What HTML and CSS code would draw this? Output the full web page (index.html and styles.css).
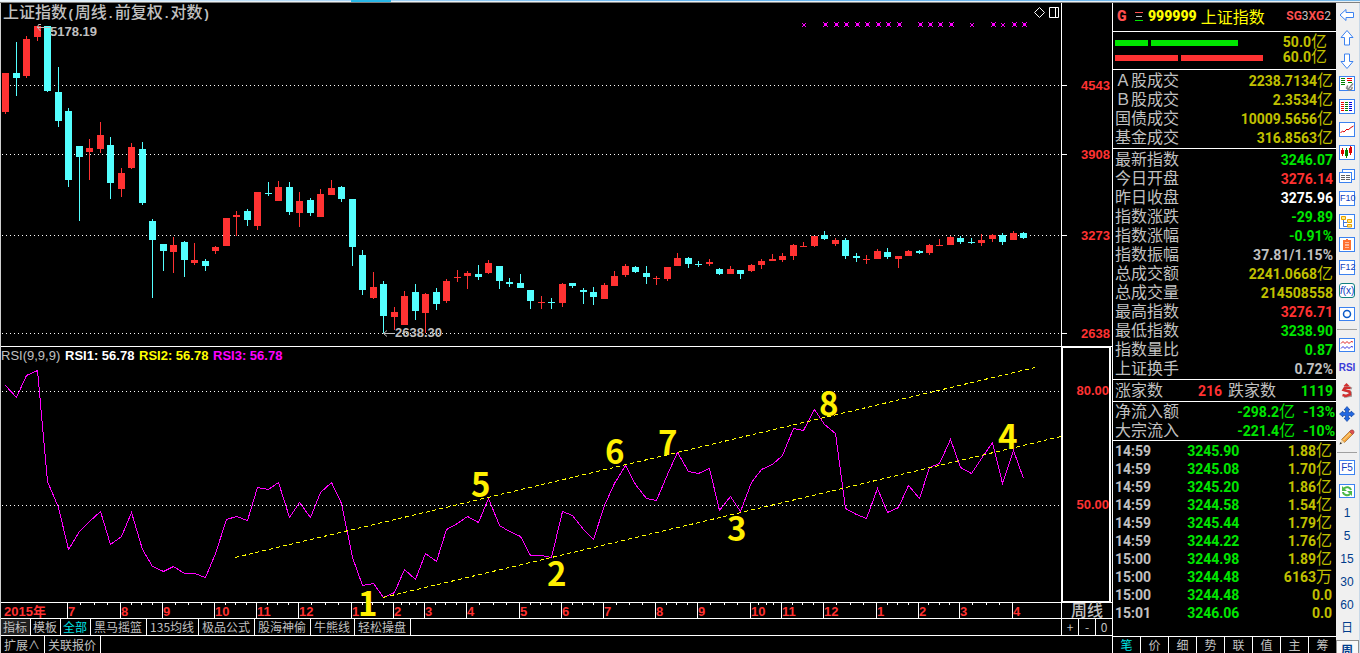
FILE: index.html
```html
<!DOCTYPE html>
<html lang="zh-CN">
<head>
<meta charset="utf-8">
<title>上证指数</title>
<link rel="stylesheet" href="styles.css">
</head>
<body>
<div class="app">
  <div class="topbar"><span class="topbar-mark"></span></div>
  <div class="workspace">
    <main class="charts">
      <section class="row price">
        <svg class="plot" height="343">
          <g transform="translate(-1 -3)">
            <g class="grid">
              <line x1="2" x2="100%" y1="85.5" y2="85.5"/>
              <line x1="2" x2="100%" y1="154.5" y2="154.5"/>
              <line x1="2" x2="100%" y1="235.5" y2="235.5"/>
              <line x1="2" x2="100%" y1="333.5" y2="333.5"/>
            </g>
            <path id="candles-up" class="up"/>
            <path id="candles-down" class="down"/>
            <path id="marks" class="marks"/>
            <path class="pointer" d="M37 27.500H50M41 24.500H38.500L37.500 27.500L40.500 31M384 333.500H395M387 330.500L383.500 333.500L387 336.500"/>
            <text class="title" x="3" y="18">上证指数<tspan class="punct">(</tspan>周线<tspan class="punct">.</tspan>前复权<tspan class="punct">.</tspan>对数<tspan class="punct">)</tspan></text>
            <text class="note" x="50" y="36">5178.19</text>
            <text class="note" x="395" y="337">2638.30</text>
            <path class="tool" d="M1039.500 7.500L1044.500 12.500L1039.500 17.500L1034.500 12.500Z"/>
            <path class="tool" d="M1049.500 7.500H1058.500V17.500H1049.500ZM1055.500 7.500V17.500"/>
          </g>
        </svg>
        <svg class="scale" height="343">
          <g transform="translate(0 -3)">
            <path class="tick" d="M0 85.500H5M0 154.500H5M0 235.500H5M0 333.500H5"/>
            <text class="scale-text" x="48" y="90">4543</text>
            <text class="scale-text" x="48" y="159">3908</text>
            <text class="scale-text" x="48" y="240">3273</text>
            <text class="scale-text" x="48" y="338">2638</text>
          </g>
        </svg>
      </section>

      <section class="row rsi">
        <svg class="plot" height="255">
          <g transform="translate(-1 -347)">
            <g class="grid">
              <line x1="2" x2="100%" y1="391.5" y2="391.5"/>
              <line x1="2" x2="100%" y1="505.5" y2="505.5"/>
            </g>
            <polyline id="rsi-line" class="rsi-line"/>
            <path class="trend" d="M235 557.500L1035 367.500M383 597.500L1061 436.500"/>
            <text class="legend legend-name" x="1" y="360">RSI(9,9,9)</text>
            <text class="legend legend-1" x="65" y="360">RSI1: 56.78</text>
            <text class="legend legend-2" x="139" y="360">RSI2: 56.78</text>
            <text class="legend legend-3" x="213" y="360">RSI3: 56.78</text>
            <g class="wave">
              <text x="358" y="616">1</text>
              <text x="547" y="586">2</text>
              <text x="727" y="541">3</text>
              <text x="998" y="449">4</text>
              <text x="471" y="497">5</text>
              <text x="605" y="464">6</text>
              <text x="658" y="455">7</text>
              <text x="819" y="416">8</text>
            </g>
          </g>
        </svg>
        <svg class="scale scale-boxed" height="253">
          <g transform="translate(0 -348)">
            <text class="scale-text" x="46" y="395">80.00</text>
            <text class="scale-text" x="46" y="509">50.00</text>
          </g>
        </svg>
      </section>

      <section class="row timeline">
        <svg class="plot" height="15"><g id="months" transform="translate(-1 0)"></g></svg>
        <div class="period">周线</div>
      </section>

      <nav class="row tabs">
        <div class="tab-list">
          <button class="tab tab-short tab-pressed">指标</button><button class="tab tab-short">模板</button><button class="tab tab-short tab-active">全部</button><button class="tab">黑马摇篮</button><button class="tab">135均线</button><button class="tab">极品公式</button><button class="tab">股海神偷</button><button class="tab">牛熊线</button><button class="tab">轻松操盘</button>
        </div>
        <div class="zoomers"><button>+</button><button>-</button><button>0</button></div>
      </nav>
      <nav class="row extras">
        <button class="tab">扩展∧</button><button class="tab">关联报价</button>
      </nav>
    </main>

    <aside class="quote">
      <header class="quote-head">
        <b class="flag">G</b>
        <svg class="lines" width="8" height="10"><path stroke="#ff5050" d="M0 .5H8"/><path stroke="#c0c0c0" d="M1 4.500H7"/><path stroke="#00e600" d="M0 8.500H8"/></svg>
        <b class="code">999999</b>
        <span class="name">上证指数</span>
        <span class="badges"><b>SG</b>3<b>XG</b>2</span>
      </header>
      <div class="flows">
        <div class="flow"><i class="bar buy" style="width:33px"></i><i class="bar buy" style="width:87px"></i><span class="flow-value">50.0<span class="unit">亿</span></span></div>
        <div class="flow"><i class="bar sell" style="width:63px"></i><i class="bar sell" style="width:82px"></i><span class="flow-value">60.0<span class="unit">亿</span></span></div>
      </div>
      <table class="facts">
        <tr><th>Ａ股成交</th><td class="olive">2238.7134<span class="unit">亿</span></td></tr>
        <tr><th>Ｂ股成交</th><td class="olive">2.3534<span class="unit">亿</span></td></tr>
        <tr><th>国债成交</th><td class="olive">10009.5656<span class="unit">亿</span></td></tr>
        <tr><th>基金成交</th><td class="olive">316.8563<span class="unit">亿</span></td></tr>
      </table>
      <table class="facts">
        <tr><th>最新指数</th><td class="green">3246.07</td></tr>
        <tr><th>今日开盘</th><td class="red">3276.14</td></tr>
        <tr><th>昨日收盘</th><td class="white">3275.96</td></tr>
        <tr><th>指数涨跌</th><td class="green">-29.89</td></tr>
        <tr><th>指数涨幅</th><td class="green">-0.91%</td></tr>
        <tr><th>指数振幅</th><td>37.81/1.15%</td></tr>
        <tr><th>总成交额</th><td class="olive">2241.0668<span class="unit">亿</span></td></tr>
        <tr><th>总成交量</th><td class="olive">214508558</td></tr>
        <tr><th>最高指数</th><td class="red">3276.71</td></tr>
        <tr><th>最低指数</th><td class="green">3238.90</td></tr>
        <tr><th>指数量比</th><td class="green">0.87</td></tr>
        <tr><th>上证换手</th><td>0.72%</td></tr>
      </table>
      <table class="facts breadth">
        <tr><th>涨家数</th><td class="red">216</td><th class="second">跌家数</th><td class="green falling">1119</td></tr>
      </table>
      <table class="facts inflow">
        <tr><th>净流入额</th><td class="green">-298.2<span class="unit">亿</span></td><td class="green share">-13%</td></tr>
        <tr><th>大宗流入</th><td class="green">-221.4<span class="unit">亿</span></td><td class="green share">-10%</td></tr>
      </table>
      <div class="deals">
        <table>
          <tr><td>14:59</td><td>3245.90</td><td>1.88<span class="unit">亿</span></td></tr>
          <tr><td>14:59</td><td>3245.08</td><td>1.70<span class="unit">亿</span></td></tr>
          <tr><td>14:59</td><td>3245.20</td><td>1.86<span class="unit">亿</span></td></tr>
          <tr><td>14:59</td><td>3244.58</td><td>1.54<span class="unit">亿</span></td></tr>
          <tr><td>14:59</td><td>3245.44</td><td>1.79<span class="unit">亿</span></td></tr>
          <tr><td>14:59</td><td>3244.22</td><td>1.76<span class="unit">亿</span></td></tr>
          <tr><td>15:00</td><td>3244.98</td><td>1.89<span class="unit">亿</span></td></tr>
          <tr><td>15:00</td><td>3244.48</td><td>6163<span class="unit">万</span></td></tr>
          <tr><td>15:00</td><td>3244.48</td><td>0.0</td></tr>
          <tr><td>15:01</td><td>3246.06</td><td>0.0</td></tr>
        </table>
      </div>
      <nav class="quote-tabs">
        <button class="current">笔</button><button>价</button><button>细</button><button>势</button><button>联</button><button>值</button><button>主</button><button>筹</button>
      </nav>
    </aside>

    <div class="toolbar">
      <button aria-label="后退"><svg class="ico arrow" viewBox="0 0 16 16"><path d="M1 8L7 2.500V5.500H14.500V10.500H7V13.500Z"/></svg></button>
      <button aria-label="上"><svg class="ico arrow" viewBox="0 0 16 16"><path d="M8 .5L14 7.500H10.500V15H5.500V7.500H2Z"/></svg></button>
      <button aria-label="下"><svg class="ico arrow" viewBox="0 0 16 16"><path d="M8 15.500L14 8.500H10.500V1H5.500V8.500H2Z"/></svg></button>
      <button aria-label="报价"><svg class="ico" viewBox="0 0 16 16"><rect class="frame" x=".5" y=".5" width="15" height="14"/><path stroke="#008000" d="M2 2.500H6M2 4.500H6M2 6.500H6M2 8.500H6M9 6.500H13"/><path stroke="#f00000" d="M8 2.500H13M8 4.500H13"/><path fill="none" stroke="#888" stroke-width="1.500" d="M7 11.500L9 13.500L14 7.500M9 9.500A2.500 2.500 0 1 0 13 11"/></svg></button>
      <button aria-label="列表"><svg class="ico" viewBox="0 0 16 16"><rect class="frame" x=".5" y=".5" width="15" height="14"/><path stroke="#f00000" d="M2 3.500H5M2 5.500H5M2 7.500H5M2 9.500H5M2 11.500H5"/><path stroke="#008000" d="M6 3.500H9M6 5.500H9M6 7.500H9M6 9.500H9M6 11.500H9"/><path stroke="#0000e0" d="M10 3.500H13M10 5.500H13M10 7.500H13M10 9.500H13M10 11.500H13"/></svg></button>
      <button aria-label="分时"><svg class="ico" viewBox="0 0 16 16"><rect class="frame" x=".5" y=".5" width="15" height="14"/><path fill="none" stroke="#e00000" d="M1.500 11L3.500 9L5 10L8 7L9 8L12 5.500L14.500 4"/></svg></button>
      <button aria-label="K线"><svg class="ico" viewBox="0 0 16 16"><rect class="frame" x=".5" y=".5" width="15" height="14"/><path fill="#e00000" d="M2 5h1V3h1v2h1v4H4v2H3V9H2zM10 3h1V1h1v1h1v6h-1v2h-1V8h-1z"/><path fill="#008000" d="M6 5h1V3h1v2h1v6H8v2H7v-2H6z"/></svg></button>
      <button aria-label="资讯"><svg class="ico" viewBox="0 0 16 16"><rect class="frame" x="3.500" y="1.500" width="12" height="10"/><rect class="frame" x=".5" y="4.500" width="12" height="10"/><path stroke="#606060" d="M2 7.500H6M7 7.500H11M2 9.500H6M7 9.500H11M2 11.500H6M7 11.500H11"/></svg></button>
      <button><span class="key key-long">F10</span></button>
      <button aria-label="板块"><svg class="ico" viewBox="0 0 16 16"><rect class="frame" x=".5" y=".5" width="15" height="14"/><path fill="none" stroke="#3a76e0" d="M4.500 6V12.500H8M4.500 8.500H8"/><path fill="#ffe880" stroke="#e8a000" d="M2.500 2.500H6.500V5.500H2.500ZM8.500 5.500H12.500V8.500H8.500ZM8.500 10.500H12.500V13H8.500Z"/></svg></button>
      <button aria-label="自选"><svg class="ico" viewBox="0 0 16 16"><rect class="frame" stroke="#1090f0" x=".5" y=".5" width="15" height="14"/><path fill="none" stroke="#ff7030" stroke-width="2" d="M5 4H11V12H5ZM8 2V4M5 6.500H11M5 9.500H11"/></svg></button>
      <button><span class="key key-long">F12</span></button>
      <button><span class="key key-formula"><i>f</i>(x)</span></button>
      <button aria-label="圆"><svg class="ico" viewBox="0 0 16 16"><rect class="frame" x=".5" y="1.500" width="15" height="13"/><circle cx="8" cy="8" r="3.500" fill="none" stroke="#0a5ac8" stroke-width="1.500"/></svg></button>
      <hr>
      <button aria-label="叠加"><svg class="ico" viewBox="0 0 16 16"><rect class="frame" x=".5" y="1.500" width="15" height="13"/><path fill="none" stroke="#e02020" d="M2 6.500L4 4.500L6 6.500L8 4.500L10 6.500L12 4.500L14 5"/><path fill="none" stroke="#3030e0" d="M2 11.500L4 9.500L6 11.500L8 9.500L10 11.500L12 9.500L14 10"/></svg></button>
      <button class="rsi-key">RSI</button>
      <button aria-label="资金"><svg class="ico" viewBox="0 0 16 16"><path fill="none" stroke="#a0a0a0" stroke-width="2" d="M13 5.500L8 4L5 7L12 9.500V13L5 14"/><path fill="none" stroke="#d03030" stroke-width="2.500" d="M11.500 5L6 4.500L4.500 7L10.500 8.500L11 11.500L7 13L3.500 12"/><path fill="#d03030" d="M7.500 0L10.500 3H4.500Z"/></svg></button>
      <button aria-label="移动"><svg class="ico" viewBox="0 0 16 16"><path fill="#2468e0" stroke="#083c9c" stroke-width=".6" d="M8 .5L11 4H9.500V6.500H12V5L15.500 8L12 11V9.500H9.500V12H11L8 15.500L5 12H6.500V9.500H4V11L.5 8L4 5V6.500H6.500V4H5Z"/></svg></button>
      <button aria-label="画线"><svg class="ico" viewBox="0 0 16 16"><path fill="#f5a63c" stroke="#8a5520" stroke-width=".6" d="M2.500 10.500L10.500 2.500L13.500 5.500L5.500 13.500Z"/><path fill="#e05050" stroke="#904040" stroke-width=".6" d="M10.500 2.500L12 1H14L15 2.500V4L13.500 5.500Z"/><path fill="#f4dcb0" d="M2.500 10.500L5.500 13.500L1 15Z"/><path fill="#303030" d="M1.500 13L3 14.500L.5 15.500Z"/><path stroke="#ffe0a0" d="M4.500 11L11.500 4"/></svg></button>
      <hr>
      <button><span class="key">F5</span></button>
      <button aria-label="刷新"><svg class="ico" viewBox="0 0 16 16"><rect class="frame" x=".5" y="1.500" width="15" height="13"/><path fill="none" stroke="#4cb848" stroke-width="2" d="M12 7A4 3.500 0 0 0 5 5.500M4 9A4 3.500 0 0 0 11 11"/><path fill="#4cb848" d="M3 3V8H8ZM13 13V8H8Z"/></svg></button>
      <button>1</button>
      <button>5</button>
      <button>15</button>
      <button>30</button>
      <button>60</button>
      <button class="cjk">日</button>
      <button class="cjk chosen">周</button>
    </div>
  </div>
</div>
<script src="chart.js"></script>
</body>
</html>
```
FILE: styles.css
```css
* { box-sizing: border-box; }

body {
  margin: 0;
  background: #000;
  color: #c0c0c0;
  font-family: "Liberation Sans", "Noto Sans CJK SC", sans-serif;
}

button {
  margin: 0;
  padding: 0;
  border: 0;
  background: none;
  color: inherit;
  font: inherit;
  cursor: pointer;
}

.app {
  display: flex;
  flex-direction: column;
  height: 100vh;
  overflow: hidden;
}

.topbar {
  flex: none;
  height: 3px;
  border-bottom: 1px solid #808080;
  background: linear-gradient(to right, #f0f8ff, #64b4f0 50%, #78b8e8);
  box-shadow: inset 0 -1px #e8f0f4;
}
.topbar-mark {
  display: block;
  width: 40px;
  height: 2px;
  margin-left: 351px;
  background: #28b8e8;
}

.workspace {
  display: flex;
  flex: 1;
  min-height: 0;
}

/* Chart column */
.charts {
  flex: 1;
  min-width: 0;
  border-left: 1px solid #d0d0d0;
}
.row {
  display: flex;
  border-bottom: 1px solid #fff;
}
.plot {
  display: block;
  flex: 1;
  min-width: 0;
}
.scale {
  display: block;
  flex: none;
  width: 51px;
  border-left: 1px solid #fff;
}
.rsi .plot {
  position: relative;
  z-index: 1;
  overflow: visible;
}
.scale-boxed {
  width: 50px;
  height: 257px;
  margin: -1px 1px -1px 0;
  border: 2px solid #fff;
}

.grid line {
  stroke: #fff;
  stroke-dasharray: 1 3;
}
.up { fill: #ff3232; }
.down { fill: #54ffff; }
.marks { fill: #f0f; }
.pointer, .tool, .tick { fill: none; stroke: #c0c0c0; }
.tool, .tick { stroke: #fff; }
.title {
  fill: #c0c0c0;
  font: 500 16px "Noto Sans CJK SC", sans-serif;
}
.punct { font: bold 13px "Liberation Mono", monospace; }
.note, .scale-text, .legend, .month {
  font: bold 13px "Liberation Sans", "Noto Sans CJK SC", sans-serif;
}
.note { fill: #c0c0c0; }
.scale-text { fill: #ff3232; text-anchor: end; }
.month { fill: #ff3232; }
.legend-name { fill: #c0c0c0; font-weight: 400; }
.legend-1 { fill: #fff; }
.legend-2 { fill: #ff0; }
.legend-3 { fill: #f0f; }
.rsi-line { fill: none; stroke: #f0f; shape-rendering: crispEdges; }
.trend {
  fill: none;
  stroke: #ff0;
  stroke-dasharray: 4 3;
  shape-rendering: crispEdges;
}
.wave {
  fill: #fff000;
  font: bold 33px "Noto Sans CJK SC", sans-serif;
}

.period {
  width: 51px;
  height: 15px;
  border-left: 1px solid #fff;
  font: 500 16px/12px "Noto Sans CJK SC", sans-serif;
  text-align: center;
}

/* Bottom tab rows */
.tabs, .extras {
  font: 12px/16px "Noto Sans CJK SC", sans-serif;
}
.tab-list { display: flex; flex: 1; }
.tab {
  padding: 0 4px 0 3px;
  border-right: 1px solid #fff;
  white-space: nowrap;
}
.tab-short { padding: 0 3px 0 2px; }
.tab-pressed { background: #202020; }
.tab-active { color: #00e6e6; }
.zoomers { display: flex; width: 51px; }
.zoomers button {
  flex: 1;
  height: 16px;
  border-left: 1px solid #fff;
}
.extras { height: 17px; border-bottom: 0; }

/* Quote panel */
.quote {
  display: flex;
  flex: none;
  flex-direction: column;
  width: 224px;
  border-left: 1px solid #fff;
  font: bold 14px/19px Roboto, "Noto Sans CJK SC", sans-serif;
}
.quote-head {
  display: flex;
  align-items: center;
  height: 29px;
  padding: 0 5px 1px 4px;
  border-bottom: 1px solid #fff;
}
.flag { width: 18px; color: #ff5050; }
.lines { margin-right: 5px; }
.code { color: #ff0; }
.name {
  margin-left: 4px;
  color: #ff0;
  font: 16px/19px "Noto Sans CJK SC", sans-serif;
}
.badges { margin-left: auto; font-size: 12px; font-weight: 400; }
.badges b { color: #ff5050; }

.flows {
  height: 38px;
  padding: 3px 9px 0 2px;
  border-bottom: 1px solid #fff;
}
.flow {
  display: flex;
  gap: 3px;
  align-items: center;
  height: 15px;
}
.bar { height: 6px; }
.buy { background: #00e600; }
.sell { background: #ff3232; }
.flow-value { margin-left: auto; color: #c0c000; }
.unit { font-size: 16px; font-weight: 400; line-height: 16px; }

.quote table {
  width: 100%;
  border-collapse: collapse;
}
.quote th, .quote td {
  height: 19px;
  padding: 0;
  line-height: 18px;
  text-align: right;
  white-space: nowrap;
}
.quote th {
  font: 16px/16px "Noto Sans CJK SC", sans-serif;
  text-align: left;
  vertical-align: top;
}
.quote .facts {
  border-collapse: separate;
  border-spacing: 0;
  padding: 1px 3px 1px 2px;
  border-bottom: 1px solid #fff;
}
.quote .inflow { padding: 0 1px 0 2px; }
.quote .second { width: 54px; padding-left: 6px; }
.quote .falling { width: 57px; }
.quote .share { width: 40px; }
.olive { color: #c0c000; }
.green { color: #00e600; }
.red { color: #ff3232; }
.white { color: #fff; }

.deals {
  flex: 1;
  padding: 1px 4px 0 2px;
}
.quote .deals td { height: 18px; width: 33%; }
.quote .deals td:first-child { text-align: left; }
.quote .deals td:nth-child(2) { width: 40%; padding-right: 34px; color: #00e600; }
.quote .deals td:last-child { color: #c0c000; }

.quote-tabs {
  display: flex;
  height: 17px;
  border-top: 1px solid #fff;
  font: 12px/16px "Noto Sans CJK SC", sans-serif;
}
.quote-tabs button { flex: 1; }
.quote-tabs button + button { border-left: 1px solid #fff; }
.quote-tabs .current { color: #00e6e6; }

/* Icon toolbar */
.toolbar {
  display: flex;
  flex: none;
  flex-direction: column;
  width: 24px;
  overflow: hidden;
  border-right: 1px solid #c8d8e8;
  background: #f0f0f0;
  color: #003c8c;
  font: 12px/23px "Liberation Sans", "Noto Sans CJK SC", sans-serif;
}
.toolbar button {
  display: flex;
  flex: none;
  align-items: center;
  justify-content: center;
  height: 23px;
  padding-right: 1px;
}
.toolbar hr {
  flex: none;
  width: 20px;
  height: 1px;
  margin: 4px 1px 3px;
  border: 0;
  background: #a0a0a0;
}
.ico { width: 16px; height: 16px; }
.frame { fill: #fff; stroke: #3c82f0; }
.arrow path { fill: #fff; stroke: #3c82f0; }
.key {
  width: 16px;
  height: 15px;
  border: 1px solid #3c82f0;
  background: #fff;
  color: #1040c0;
  font: 10px/13px "Liberation Sans", sans-serif;
  text-align: center;
}
.key-long { font-size: 9px; }
.key-formula { border-color: #108080; border-radius: 3px; }
.rsi-key { color: #3c3cd8; font-size: 10px; font-weight: bold; }
.toolbar .chosen {
  border: 1px solid #909090;
  background: #f8f8f8;
  font-weight: bold;
}
```
FILE: chart.js
```javascript
// [direction, body top, body bottom, high, low]
const candles = [
  [1,73,112,73,114],[0,73,78,42,96],[1,39,76,36,78],[1,26,37,26,41],[0,26,91,26,92],
  [0,92,121,67,127],[0,111,180,108,187],[0,146,157,146,221],[1,148,152,139,180],[1,135,149,122,153],
  [0,145,183,137,199],[1,173,189,168,197],[1,147,168,143,169],[0,149,203,142,205],[0,221,240,219,298],
  [0,244,251,244,271],[1,245,252,237,273],[0,242,260,241,277],[1,260,263,243,265],[0,261,266,259,271],
  [1,247,251,246,254],[1,218,246,218,246],[1,215,217,211,236],[0,211,220,209,226],[1,192,226,192,230],
  [0,193,194,182,196],[1,187,201,181,201],[0,187,212,182,215],[1,201,213,192,227],[0,200,213,198,216],
  [1,194,217,189,217],[1,188,195,180,195],[0,187,199,186,202],[0,199,247,199,266],[0,255,290,250,295],
  [1,287,298,272,299],[0,284,316,281,333],[1,312,317,307,330],[1,296,325,291,325],[0,292,311,284,320],
  [1,294,313,293,333],[0,292,304,288,310],[1,281,301,279,303],[1,277,278,270,282],[1,273,276,271,289],
  [0,274,277,265,280],[1,263,273,260,274],[0,266,281,266,289],[0,282,284,278,287],[0,283,288,274,288],
  [0,290,301,290,309],[1,302,303,296,309],[0,302,303,298,309],[1,284,303,283,307],[0,283,286,283,288],
  [0,290,292,288,304],[0,292,297,287,305],[1,285,299,283,299],[1,276,286,271,286],[1,266,275,264,277],
  [0,267,272,266,273],[0,273,277,266,284],[1,278,279,276,285],[1,267,279,267,281],[1,258,266,253,266],
  [0,258,264,257,268],[0,264,265,261,267],[1,262,264,259,266],[0,269,274,268,275],[1,269,274,266,274],
  [0,270,274,270,279],[1,265,271,264,272],[1,261,265,259,269],[1,259,261,254,261],[1,256,260,253,262],
  [1,245,256,244,260],[1,246,247,242,247],[1,236,246,236,247],[0,235,239,231,240],[1,240,244,238,246],
  [0,240,256,238,259],[0,256,258,253,262],[1,259,260,255,264],[1,251,259,249,259],[0,252,257,248,259],
  [1,256,259,256,268],[1,251,256,250,256],[0,251,253,250,254],[1,245,253,244,255],[1,245,246,239,246],
  [1,237,245,236,245],[0,238,242,236,244],[0,242,243,238,244],[1,240,243,234,246],[1,235,239,234,242],
  [0,235,242,233,245],[1,233,240,231,240],[0,233,238,232,239]
];

const rsi = [
  385,397,375,370,481,507,549,531,521,511,544,536,512,549,566,571,566,573,573,577,
  553,519,516,520,487,489,482,517,502,517,492,482,503,557,585,583,597,592,569,579,
  553,561,529,523,516,522,498,525,531,536,555,555,557,511,515,529,539,505,483,465,
  484,498,500,474,452,471,473,468,510,496,511,482,469,464,455,428,430,409,424,433,
  508,514,518,488,512,507,485,498,467,463,439,467,473,458,442,483,450,478
];

const left = i => Math.round(2.088 + 10.499 * i);
const setPath = (id, d) => document.getElementById(id).setAttribute('d', d);

const paths = ['', ''];
candles.forEach(([up, top, bottom, high, low], i) => {
  const x = left(i);
  paths[up] += `M${x} ${top}h7V${bottom}h-7zM${x + 3} ${high}h1V${low}h-1z`;
});
setPath('candles-down', paths[0]);
setPath('candles-up', paths[1]);

// Signal crosses above the candles: wide ones and narrow ones
const dot = (x, y, w = 1) => `M${x} ${y}h${w}v${w}h${-w}z`;
let marks = '';
[78, 79, 80, 81, 82, 83, 84, 85, 87, 88, 89, 90, 94, 96, 97].forEach(i => {
  const x = left(i) + 2;
  marks += dot(x, 22) + dot(x + 4, 22) + dot(x, 26) + dot(x + 4, 26) + dot(x + 1, 23, 3);
});
[76, 92, 95].forEach(i => {
  const x = left(i) + 2;
  marks += dot(x, 23) + dot(x + 3, 23) + dot(x + 1, 24, 2) + dot(x, 26) + dot(x + 3, 26);
});
setPath('marks', marks);

document.getElementById('rsi-line').setAttribute(
  'points', rsi.map((y, i) => `${left(i) + 3.5},${y + 0.5}`).join(' '));

// Time scale: a full-height line for each month, three short ticks between
const months = [
  [67, '7'], [120, '8'], [162, '9'], [214, '10'], [256, '11'], [298, '12'], [351, '1'],
  [393, '2'], [424, '3'], [466, '4'], [519, '5'], [561, '6'], [603, '7'], [655, '8'],
  [697, '9'], [750, '10'], [781, '11'], [823, '12'], [876, '1'], [918, '2'], [959, '3'], [1012, '4']
];
let lines = '';
let labels = '<text class="month" x="4" y="13">2015年</text>';
months.forEach(([x, name], i) => {
  lines += `M${x + 0.5} 0V15`;
  const next = months[i + 1];
  if (next) {
    for (let k = 1; k < 4; k++) {
      lines += `M${Math.round(x + (next[0] - x) * k / 4) + 0.5} 0v2`;
    }
  }
  labels += `<text class="month" x="${x + 1}" y="13">${name}</text>`;
});
document.getElementById('months').innerHTML = `<path class="tick" d="${lines}"/>${labels}`;
```
